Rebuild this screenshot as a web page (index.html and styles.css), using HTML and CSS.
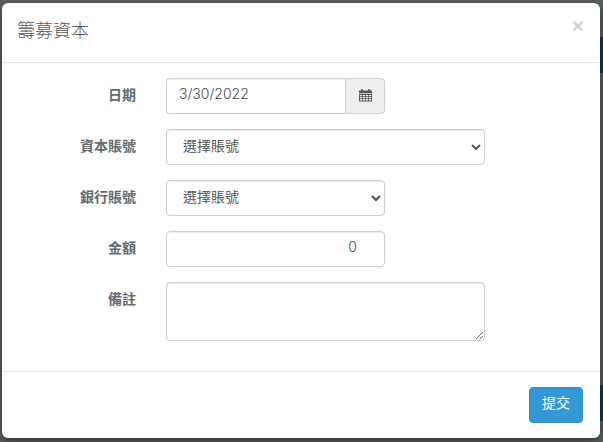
FILE: index.html
```html
<!DOCTYPE html>
<html lang="zh-Hant">
<head>
    <meta charset="UTF-8">
    <meta name="viewport" content="width=device-width, initial-scale=1.0">
    <title>籌募資本</title>
    <link rel="stylesheet" href="styles.css">
</head>
<body>
    <div class="backdrop">
        <div class="band band-top"></div>
        <div class="band band-bottom"></div>
    </div>
    <div class="modal">
        <div class="modal-header">
            <h4 class="modal-title">籌募資本</h4>
            <button type="button" class="close">×</button>
        </div>
        <form class="modal-body">
            <div class="form-group">
                <label class="control-label">日期</label>
                <div class="input-group">
                    <input type="text" class="form-control" value="3/30/2022">
                    <span class="input-addon">
                        <svg class="icon-calendar" width="13" height="14" viewBox="0 0 14 14">
                            <path fill="#555" d="M0 2.2h2.4V.6h1.6v1.6h6V.6h1.6v1.6H14v3H0z"/>
                            <path fill="#555" fill-rule="evenodd" d="M0 5.8h14V14H0zM1 7v1.4h2.4V7zm3.2 0v1.4h2.4V7zm3.2 0v1.4h2.4V7zm3.2 0v1.4H13V7zM1 9.2v1.4h2.4V9.2zm3.2 0v1.4h2.4V9.2zm3.2 0v1.4h2.4V9.2zm3.2 0v1.4H13V9.2zM1 11.4v1.4h2.4v-1.4zm3.2 0v1.4h2.4v-1.4zm3.2 0v1.4h2.4v-1.4zm3.2 0v1.4H13v-1.4z"/>
                        </svg>
                    </span>
                </div>
            </div>
            <div class="form-group">
                <label class="control-label">資本賬號</label>
                <select class="form-control field-wide">
                    <option>選擇賬號</option>
                </select>
            </div>
            <div class="form-group">
                <label class="control-label">銀行賬號</label>
                <select class="form-control field-narrow">
                    <option>選擇賬號</option>
                </select>
            </div>
            <div class="form-group">
                <label class="control-label">金額</label>
                <input type="text" class="form-control field-narrow amount" value="0">
            </div>
            <div class="form-group">
                <label class="control-label">備註</label>
                <textarea class="form-control field-wide notes"></textarea>
            </div>
        </form>
        <div class="modal-footer">
            <button type="button" class="btn-submit">提交</button>
        </div>
    </div>
</body>
</html>
```
FILE: styles.css
```css
* {
    box-sizing: border-box;
}
html, body {
    height: 100%;
}
body {
    margin: 0;
    padding: 3px 3px 4px 2px;
    background-color: #5c5f60;
    font-family: Inter, "Noto Sans CJK TC", sans-serif;
    font-size: 14px;
    color: #555;
    overflow: hidden;
}
.backdrop {
    position: absolute;
    top: 0;
    left: 0;
    right: 0;
    bottom: 0;
}
.band {
    position: absolute;
    right: 0;
    width: 3px;
    background-color: #123c54;
}
.band-top {
    top: 37px;
    height: 36px;
}
.band-bottom {
    top: 385px;
    height: 36px;
}
.modal {
    position: relative;
    height: 435px;
    background-color: #fff;
    border-radius: 6px;
    box-shadow: 0 3px 9px rgba(0, 0, 0, 0.5);
}
.modal-header {
    display: flex;
    justify-content: space-between;
    height: 60px;
    padding: 15px;
    border-bottom: 1px solid #e5e5e5;
}
.modal-title {
    margin: 0;
    font-size: 18px;
    font-weight: 300;
    line-height: 26px;
    color: #555;
}
.close {
    margin: -2px 1px 0 0;
    padding: 0;
    height: 20px;
    border: none;
    background: none;
    font-family: "Liberation Sans", sans-serif;
    font-size: 21px;
    font-weight: 700;
    line-height: 20px;
    color: #d2d2d2;
}
.modal-body {
    display: flex;
    flex-direction: column;
    gap: 15px;
    height: 308px;
    padding: 15px 15px 0;
}
.form-group {
    display: flex;
    gap: 30px;
}
.control-label {
    width: 119px;
    padding-top: 7px;
    font-size: 14px;
    font-weight: 700;
    line-height: 20px;
    text-align: right;
    color: #626b70;
}
.form-control {
    height: 36px;
    padding: 3px 12px 9px;
    border: 1px solid #ccc;
    border-radius: 4px;
    background-color: #fff;
    font-family: inherit;
    font-size: 14px;
    font-weight: 300;
    color: #444;
    box-shadow: inset 0 1px 1px rgba(0, 0, 0, 0.075);
}
select.form-control {
    padding: 2px 12px 6px;
    font-weight: 400;
    color: #555;
}
.input-group {
    display: flex;
    width: 219px;
}
.input-group .form-control {
    flex: 1;
    min-width: 0;
    border-right: none;
    border-radius: 4px 0 0 4px;
}
.input-addon {
    display: flex;
    align-items: center;
    justify-content: center;
    width: 40px;
    padding-bottom: 3px;
    border: 1px solid #ccc;
    border-radius: 0 4px 4px 0;
    background-color: #eee;
}
.field-wide {
    width: 319px;
}
.field-narrow {
    width: 219px;
}
.amount {
    text-align: right;
    padding-right: 27px;
}
.notes {
    height: 59px;
}
.modal-footer {
    display: flex;
    justify-content: flex-end;
    padding: 15px 17px;
    border-top: 1px solid #e5e5e5;
}
.btn-submit {
    width: 54px;
    height: 36px;
    padding: 0 0 6px;
    border: 1px solid #2e8ecb;
    border-radius: 4px;
    background-color: #3498d4;
    font-family: inherit;
    font-size: 14px;
    font-weight: 400;
    color: #fff;
}
```
